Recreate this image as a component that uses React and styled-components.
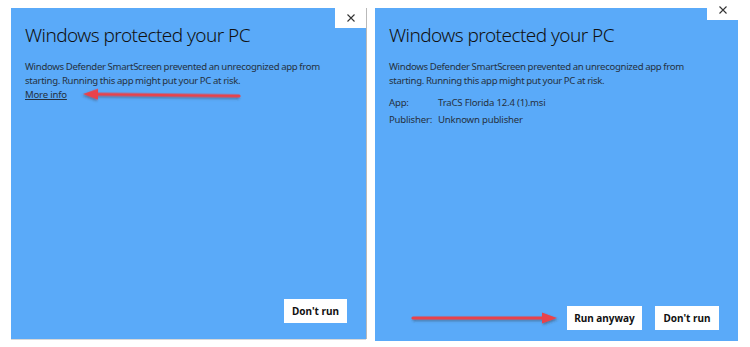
import React from "react";
import styled, { createGlobalStyle } from "styled-components";

const GlobalStyle = createGlobalStyle`
  html, body {
    margin: 0;
    padding: 0;
    background: #ffffff;
  }
  body {
    font-family: "Noto Sans", "Open Sans", sans-serif;
  }
`;

const Page = styled.div`
  width: 750px;
  height: 347px;
  display: flex;
  align-items: flex-start;
  padding: 8px 0 0 11px;
  box-sizing: border-box;
  gap: 9px;
`;

const Dialog = styled.div`
  position: relative;
  width: ${(p) => p.w}px;
  height: ${(p) => p.h}px;
  background: #5aaaf9;
  box-shadow: ${(p) => (p.framed ? "1px 0 0 #b9b9b9, 0 1px 0 #d8d8d8" : "none")};
  display: flex;
  flex-direction: column;
  box-sizing: border-box;
`;

const TopBar = styled.div`
  display: flex;
  justify-content: flex-end;
  height: 20px;
`;

const CloseButton = styled.div`
  width: 31px;
  height: 20px;
  margin-top: ${(p) => p.lift}px;
  background: #ffffff;
  display: flex;
  align-items: center;
  justify-content: center;
`;

const Content = styled.div`
  padding: 0 14px;
  display: flex;
  flex-direction: column;
  flex: 1;
`;

const Title = styled.h1`
  margin: -5px 0 0 0;
  font-weight: 300;
  font-size: 19px;
  line-height: 24px;
  color: #111;
  letter-spacing: -0.55px;
  white-space: nowrap;
`;

const Body = styled.p`
  margin: 13px 0 0 0;
  font-size: 9.6px;
  line-height: 14px;
  letter-spacing: -0.3px;
  word-spacing: -0.3px;
  color: #25313f;
  white-space: nowrap;
`;

const MoreInfo = styled.a`
  font-size: 9.6px;
  line-height: 13px;
  letter-spacing: -0.2px;
  color: #25313f;
  text-decoration: underline;
  align-self: flex-start;
`;

const Details = styled.div`
  margin-top: 8px;
  display: grid;
  grid-template-columns: 49px auto;
  row-gap: 3px;
  font-size: 9.6px;
  line-height: 14px;
  letter-spacing: -0.2px;
  color: #25313f;
  white-space: nowrap;
`;

const Footer = styled.div`
  margin-top: auto;
  display: flex;
  justify-content: flex-end;
  gap: 13px;
  padding: 0 ${(p) => p.pr}px ${(p) => p.pb}px 0;
`;

const Button = styled.button`
  width: ${(p) => p.w}px;
  height: 24px;
  border: none;
  background: #ffffff;
  font-family: "Noto Sans", sans-serif;
  font-weight: 700;
  font-size: 10px;
  color: #111;
  padding: 0;
`;

const Arrow = styled.svg`
  position: absolute;
  left: ${(p) => p.x}px;
  top: ${(p) => p.y}px;
  overflow: visible;
`;

function CloseIcon() {
  return (
    <svg width="8" height="8" viewBox="0 0 8 8">
      <path d="M0.5 0.5 L7.5 7.5 M7.5 0.5 L0.5 7.5" stroke="#333" strokeWidth="1.1" />
    </svg>
  );
}

function RedArrow({ x, y, len, dir, tilt = 0 }) {
  const flip = dir === "left";
  return (
    <Arrow x={x} y={y} width={len} height="14" viewBox={`0 0 ${len} 14`}>
      <defs>
        <filter id={`sh-${dir}`} x="-10%" y="-50%" width="120%" height="200%">
          <feDropShadow dx="1" dy="1.5" stdDeviation="1" floodColor="#333" floodOpacity="0.45" />
        </filter>
      </defs>
      <g
        filter={`url(#sh-${dir})`}
        transform={`${flip ? `translate(${len} 0) scale(-1 1)` : ""} rotate(${tilt} ${len / 2} 7)`}
      >
        <line x1="2" y1="7" x2={len - 12} y2="7" stroke="#e8434b" strokeWidth="3.2" strokeLinecap="round" />
        <polygon points={`${len - 15},1.5 ${len},7 ${len - 15},12.5`} fill="#e8434b" />
      </g>
    </Arrow>
  );
}

const warning = (
  <>
    Windows Defender SmartScreen prevented an unrecognized app from
    <br />
    starting. Running this app might put your PC at risk.
  </>
);

export default function App() {
  return (
    <>
      <GlobalStyle />
      <Page>
        <Dialog w={355} h={331} framed>
          <TopBar>
            <CloseButton lift={0}>
              <CloseIcon />
            </CloseButton>
          </TopBar>
          <Content>
            <Title>Windows protected your PC</Title>
            <Body>{warning}</Body>
            <MoreInfo>More info</MoreInfo>
            <Footer pr={5} pb={16}>
              <Button w={63}>Don't run</Button>
            </Footer>
          </Content>
          <RedArrow x={72} y={80} len={158} dir="left" tilt={-0.7} />
        </Dialog>
        <Dialog w={363} h={333}>
          <TopBar>
            <CloseButton lift={-8}>
              <CloseIcon />
            </CloseButton>
          </TopBar>
          <Content>
            <Title>Windows protected your PC</Title>
            <Body>{warning}</Body>
            <Details>
              <span>App:</span>
              <span>TraCS Florida 12.4 (1).msi</span>
              <span>Publisher:</span>
              <span>Unknown publisher</span>
            </Details>
            <Footer pr={5} pb={11}>
              <Button w={75}>Run anyway</Button>
              <Button w={64}>Don't run</Button>
            </Footer>
          </Content>
          <RedArrow x={36} y={303} len={146} dir="right" />
        </Dialog>
      </Page>
    </>
  );
}
